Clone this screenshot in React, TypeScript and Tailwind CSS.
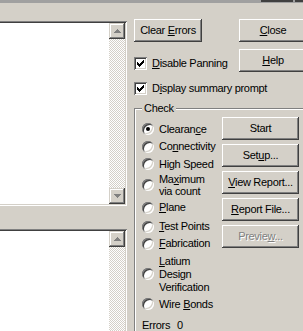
import React from "react";

const raised =
  "shadow-[inset_-1px_-1px_0_#404040,inset_1px_1px_0_#ffffff,inset_-2px_-2px_0_#808080]";
const sunken =
  "shadow-[inset_1px_1px_0_#808080,inset_-1px_-1px_0_#ffffff,inset_2px_2px_0_#404040,inset_-2px_-2px_0_#d4d0c8]";

const Btn = ({
  children,
  w = "w-[77px]",
  disabled = false,
}: {
  children: React.ReactNode;
  w?: string;
  disabled?: boolean;
}) => (
  <button
    type="button"
    className={`${w} h-[23px] shrink-0 flex items-center justify-center bg-[#d4d0c8] ${raised} ${
      disabled ? "text-[#808080] [text-shadow:1px_1px_0_#ffffff]" : "text-black"
    }`}
  >
    <span className="whitespace-pre">{children}</span>
  </button>
);

const ScrollBtn = ({ up }: { up?: boolean }) => (
  <div className="w-[16px] h-[16px] shrink-0 bg-[#d4d0c8] shadow-[inset_-1px_-1px_0_#404040,inset_1px_1px_0_#d4d0c8,inset_-2px_-2px_0_#808080,inset_2px_2px_0_#ffffff] flex items-center justify-center">
    <svg width="7" height="4" viewBox="0 0 7 4" shapeRendering="crispEdges">
      <path
        d={
          up
            ? "M3 0h1v1h1v1h1v1h1v1H0v-1h1v-1h1v-1h1z"
            : "M0 0h7v1h-1v1h-1v1h-1v1h-1v-1h-1v-1h-1v-1h-1z"
        }
        fill="#808080"
      />
    </svg>
  </div>
);

const ListBox = ({ h, bottom = true }: { h: string; bottom?: boolean }) => (
  <div className={`${h} w-[131px] shrink-0 bg-white ${sunken} flex justify-end p-[2px]`}>
    <div className="w-[16px] h-full flex flex-col">
      <ScrollBtn up />
      <div className="flex-1 bg-[repeating-conic-gradient(#ffffff_0_25%,#d4d0c8_0_50%)] bg-[length:2px_2px]" />
      {bottom && <ScrollBtn />}
    </div>
  </div>
);

const checkRows: [number, number, number][] = [
  [0, 6, 1],
  [1, 5, 2],
  [2, 0, 1],
  [2, 4, 3],
  [3, 0, 2],
  [3, 3, 3],
  [4, 0, 5],
  [5, 1, 3],
  [6, 2, 1],
];

const CheckBox = () => (
  <div className={`w-[13px] h-[13px] shrink-0 bg-white ${sunken} flex items-center justify-center`}>
    <svg width="7" height="7" viewBox="0 0 7 7" shapeRendering="crispEdges">
      {checkRows.map(([y, x, w], i) => (
        <rect key={i} x={x} y={y} width={w} height={1} fill="#000" />
      ))}
    </svg>
  </div>
);

const Radio = ({ on = false }: { on?: boolean }) => (
  <div className="w-[12px] h-[12px] shrink-0 rounded-full bg-white shadow-[inset_1px_1px_0_#808080,inset_-1px_-1px_0_#ffffff,inset_2px_2px_0_#404040,inset_-2px_-2px_0_#d4d0c8] flex items-center justify-center">
    {on && <div className="w-[4px] h-[4px] rounded-full bg-black" />}
  </div>
);

const radios: { label: React.ReactNode; h: string; lh?: string; on?: boolean }[] = [
  { label: <>Clearan<u>c</u>e</>, h: "h-[18px]", on: true },
  { label: <>Co<u>n</u>nectivity</>, h: "h-[17px]" },
  { label: <>High Speed</>, h: "h-[18px]" },
  { label: <>Ma<u>x</u>imum<br />via count</>, h: "h-[24px]", lh: "leading-[12px]" },
  { label: <><u>P</u>lane</>, h: "h-[21px]" },
  { label: <><u>T</u>est Points</>, h: "h-[17px]" },
  { label: <><u>F</u>abrication</>, h: "h-[17px]" },
  { label: <><u>L</u>atium<br />Design<br />Verification</>, h: "h-[44px]", lh: "leading-[13px]" },
  { label: <>Wire <u>B</u>onds</>, h: "h-[16px]" },
];

export default function App() {
  return (
    <div className="w-[303px] h-[331px] overflow-hidden bg-[#d4d0c8] flex flex-col font-['Liberation_Sans',Arial,sans-serif] text-[11px] leading-[13px] tracking-[-0.3px] text-black">
      {/* top edge */}
      <div className="h-[3px] shrink-0 bg-[#a0a0a0] flex">
        <div className="w-[261px] shrink-0" />
        <div className="w-[32px] h-[2px] shrink-0 bg-[#404040]" />
        <div className="w-[2px] shrink-0" />
        <div className="flex-1 h-[2px] bg-[#404040]" />
      </div>

      <div className="flex flex-1">
        {/* lists */}
        <div className="-ml-[4px] w-[131px] shrink-0 flex flex-col pt-[18px]">
          <ListBox h="h-[185px]" />
          <div className="mt-[23px]">
            <ListBox h="h-[130px]" bottom={false} />
          </div>
        </div>

        {/* controls */}
        <div className="ml-[7px] w-[200px] shrink-0 flex flex-col pt-[16px]">
          <div className="flex h-[23px]">
            <Btn w="w-[68px]">
              Clear <u>E</u>rrors
            </Btn>
            <div className="w-[37px] shrink-0" />
            <Btn w="w-[68px]">
              <u>C</u>lose
            </Btn>
          </div>

          <div className="flex h-[23px] mt-[7px]">
            <div className="w-[105px] shrink-0 flex items-center gap-[5px] h-[13px] mt-[8px]">
              <CheckBox />
              <span>
                <u>D</u>isable Panning
              </span>
            </div>
            <Btn w="w-[68px]">
              <u>H</u>elp
            </Btn>
          </div>

          <div className="flex items-center gap-[5px] h-[13px] mt-[10px]">
            <CheckBox />
            <span>
              D<u>i</u>splay summary prompt
            </span>
          </div>

          <div className="relative mt-[13px] w-[200px] flex-1 border-t border-l border-[#808080] shadow-[inset_1px_1px_0_#ffffff]">
            <span className="absolute -top-[7px] left-[7px] px-[2px] bg-[#d4d0c8]">Check</span>
            <div className="flex pl-[7px] pt-[8px]">
              <div className="w-[80px] shrink-0 flex flex-col pt-[3px]">
                {radios.map((r, i) => (
                  <div key={i} className={`${r.h} flex items-center gap-[5px]`}>
                    <Radio on={r.on} />
                    <span className={`${r.lh ?? ""} whitespace-nowrap`}>{r.label}</span>
                  </div>
                ))}
                <div className="flex mt-[6px] h-[14px] items-center">
                  <span className="w-[35px]">Errors</span>
                  <span>0</span>
                </div>
              </div>
              <div className="flex flex-col gap-[4px]">
                <Btn>Start</Btn>
                <Btn>
                  Set<u>u</u>p...
                </Btn>
                <Btn>
                  <u>V</u>iew Report...
                </Btn>
                <Btn>
                  <u>R</u>eport File...
                </Btn>
                <Btn disabled>
                  Previe<u>w</u>...
                </Btn>
              </div>
            </div>
          </div>
        </div>
      </div>
    </div>
  );
}
